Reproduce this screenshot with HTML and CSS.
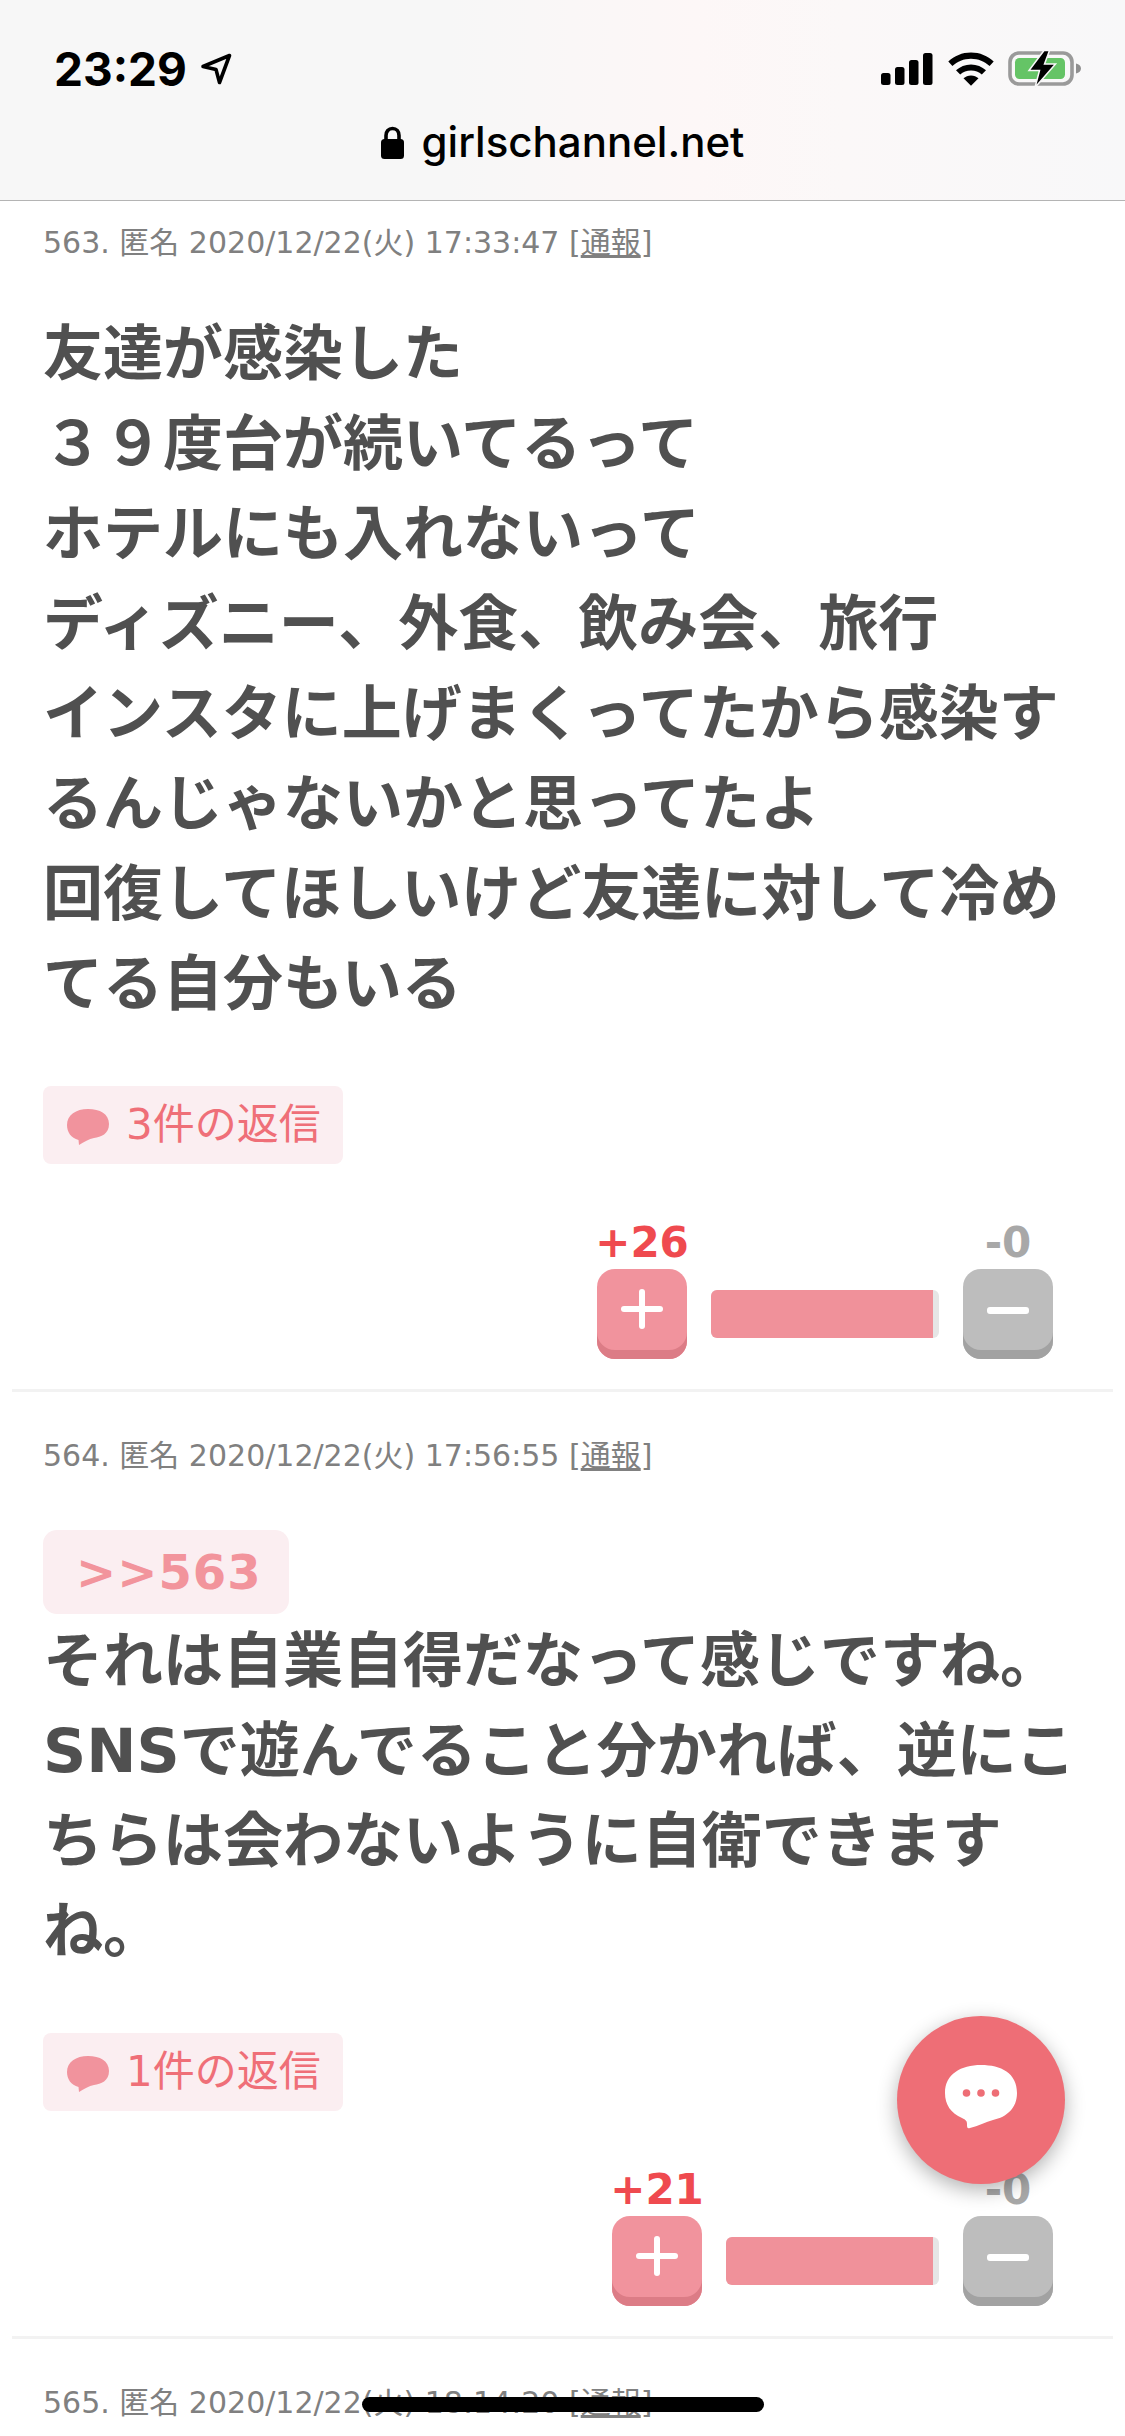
FILE: index.html
```html
<!DOCTYPE html>
<html lang="ja">
<head>
<meta charset="utf-8">
<title>girlschannel.net</title>
<link rel="stylesheet" href="styles.css">
</head>
<body>
<div class="page">
  <header class="browser-bar">
    <div class="status">
      <div class="status-left">
        <span class="clock">23:29</span>
        <svg class="loc" width="32" height="32" viewBox="0 0 32 32"><path d="M3 13.5 29.5 2.5 19.5 29.5 16 16.5Z" fill="none" stroke="#000" stroke-width="3.6" stroke-linejoin="round"/></svg>
      </div>
      <div class="status-right">
        <svg width="52" height="34" viewBox="0 0 52 34"><rect x="0" y="21" width="9.5" height="12" rx="2.5"/><rect x="14" y="15" width="9.5" height="18" rx="2.5"/><rect x="28" y="8" width="9.5" height="25" rx="2.5"/><rect x="42" y="1" width="9.5" height="32" rx="2.5"/></svg>
        <svg class="wifi" width="46" height="34" viewBox="0 0 46 34"><path d="M0.3 9.6C6.3 4 14.2 .6 23 .6S39.7 4 45.7 9.6L41.6 14C36.7 9.5 30.2 6.7 23 6.7S9.3 9.5 4.4 14Z"/><path d="M8 18.2C12 14.6 17.2 12.4 23 12.4S34 14.6 38 18.2L33.8 22.6C31 20 27.2 18.5 23 18.5S15 20 12.2 22.6Z"/><path d="M15.5 26.3C17.5 24.6 20.1 23.5 23 23.5S28.5 24.6 30.5 26.3L23 33.8Z"/></svg>
        <svg class="battery" width="74" height="38" viewBox="0 0 74 38"><rect x="2" y="3" width="62" height="31" rx="9" fill="none" stroke="#9a9a9a" stroke-width="3.6"/><rect x="7" y="8" width="50" height="21" rx="4.5" fill="#65c466"/><path d="M68 13.5c3 .6 5 2.600 5 5s-2 4.400-5 5Z" fill="#8f8f8f"/><path d="M36 .5 21 20.500H31.500L27 37.500 47.500 14H36.500L41.500 .5Z" fill="#000" stroke="#f8f8f8" stroke-width="1.500"/></svg>
      </div>
    </div>
    <div class="address">
      <svg class="lock" width="23" height="33" viewBox="0 0 23 33"><path d="M5 14V9.500C5 5.500 7.500 2.500 11.500 2.500S18 5.500 18 9.500V14" fill="none" stroke="#000" stroke-width="3.600"/><rect x="0" y="13" width="23" height="20" rx="3.500"/></svg>
      <span class="url">girlschannel.net</span>
    </div>
  </header>

  <main>
    <article class="post post-first">
      <p class="meta">563. 匿名 2020/12/22(火) 17:33:47 [<a class="report">通報</a>]</p>
      <p class="body">友達が感染した<br>３９度台が続いてるって<br>ホテルにも入れないって<br>ディズニー、外食、飲み会、旅行<br>インスタに上げまくってたから感染するんじゃないかと思ってたよ<br>回復してほしいけど友達に対して冷めてる自分もいる</p>
      <a class="replies">
        <svg class="bubble" width="42" height="37" viewBox="0 0 42 37"><path d="M21 0C33 0 42 5 42 15 42 25 34 28 27 29 22 30 17 33 12 36L11.500 31C4 29 0 23 0 16 0 6 9 0 21 0Z" fill="#f1939d"/></svg>
        <span>3件の返信</span>
      </a>
      <div class="votes">
        <div class="vote">
          <span class="count count-plus">+26</span>
          <button class="key key-plus"><span class="cross"></span></button>
        </div>
        <div class="bar" style="width:228px"><div class="bar-fill" style="width:222px"></div></div>
        <div class="vote">
          <span class="count count-minus">-0</span>
          <button class="key key-minus"><span class="dash"></span></button>
        </div>
      </div>
    </article>

    <article class="post">
      <p class="meta">564. 匿名 2020/12/22(火) 17:56:55 [<a class="report">通報</a>]</p>
      <a class="anchor">&gt;&gt;563</a>
      <p class="body">それは自業自得だなって感じですね。SNSで遊んでること分かれば、逆にこちらは会わないように自衛できますね。</p>
      <a class="replies">
        <svg class="bubble" width="42" height="37" viewBox="0 0 42 37"><path d="M21 0C33 0 42 5 42 15 42 25 34 28 27 29 22 30 17 33 12 36L11.500 31C4 29 0 23 0 16 0 6 9 0 21 0Z" fill="#f1939d"/></svg>
        <span>1件の返信</span>
      </a>
      <div class="votes">
        <div class="vote">
          <span class="count count-plus">+21</span>
          <button class="key key-plus"><span class="cross"></span></button>
        </div>
        <div class="bar" style="width:213px"><div class="bar-fill" style="width:207px"></div></div>
        <div class="vote">
          <span class="count count-minus">-0</span>
          <button class="key key-minus"><span class="dash"></span></button>
        </div>
      </div>
    </article>

    <article class="post">
      <p class="meta">565. 匿名 2020/12/22(火) 18:14:20 [<a class="report">通報</a>]</p>
    </article>
  </main>

  <button class="fab">
    <svg width="72" height="64" viewBox="0 0 72 64"><path d="M36 0C56 0 72 8 72 28 72 43 62 52 48 55 41 57 33 61 25 63 22 64 22 62 22 59 22 56 21 55 17 53 6 48 0 40 0 28 0 9 16 0 36 0Z" fill="#fff"/><circle cx="21.500" cy="28" r="3.800" fill="#ee6e76"/><circle cx="36" cy="28" r="3.800" fill="#ee6e76"/><circle cx="50.500" cy="28" r="3.800" fill="#ee6e76"/></svg>
  </button>
  <div class="home-bar"></div>
</div>
</body>
</html>
```
FILE: styles.css
```css
* { box-sizing: border-box; }
html, body { margin: 0; padding: 0; background: #fff; }
p { margin: 0; }

.page {
  position: relative;
  width: 1125px;
  height: 2436px;
  overflow: hidden;
  font-family: "DejaVu Sans", "Noto Sans CJK JP", sans-serif;
}

/* browser chrome */
.browser-bar {
  height: 201px;
  border-bottom: 1px solid #b4b4b4;
  background: linear-gradient(90deg, #f7f7f7 0, #f7f7f7 40%, #fdf7f7 62%, #fbf8f8 75%, #f8f8f9 100%);
  padding-top: 46px;
}
.status {
  display: flex;
  justify-content: space-between;
  align-items: center;
  height: 46px;
  padding: 0 43px 0 54px;
}
.status-left { display: flex; align-items: center; gap: 13px; }
.clock {
  font-family: Inter, "Liberation Sans", sans-serif;
  font-weight: 700;
  font-size: 46px;
  line-height: 46px;
  color: #000;
}
.status-right { display: flex; align-items: center; gap: 14px; }
.wifi { margin-left: 1px; }
.address {
  display: flex;
  justify-content: center;
  align-items: center;
  gap: 18px;
  margin-top: 20px;
  height: 60px;
}
.url {
  font-family: Inter, "Liberation Sans", sans-serif;
  font-weight: 500;
  font-size: 42px;
  line-height: 60px;
  color: #000;
}

/* posts */
.post {
  margin: 0 12px;
  padding: 44px 31px 30px;
  border-bottom: 3px solid #f2f2f2;
}
.post-first { padding-top: 22px; }
.meta {
  font-size: 30px;
  line-height: 40px;
  color: #808080;
  white-space: nowrap;
}
.report { text-decoration: underline; }
.body {
  margin-top: 46px;
  font-weight: 700;
  font-size: 60px;
  line-height: 90px;
  color: #505050;
}
.anchor {
  display: block;
  width: 246px;
  height: 84px;
  margin-top: 54px;
  padding-left: 33px;
  border-radius: 14px;
  background: #fbeef1;
  font-weight: 700;
  font-size: 48px;
  line-height: 84px;
  letter-spacing: 1px;
  color: #f2949c;
}
.anchor + .body { margin-top: 2px; }
.replies {
  display: flex;
  align-items: center;
  gap: 17px;
  width: 300px;
  height: 78px;
  margin-top: 57px;
  padding-left: 24px;
  border-radius: 8px;
  background: #fbeef1;
  font-size: 42px;
  line-height: 78px;
  color: #ef6f78;
}
.bubble { margin-top: 5px; }

/* votes */
.votes {
  display: flex;
  justify-content: flex-end;
  align-items: flex-end;
  gap: 24px;
  margin-top: 52px;
  padding-right: 29px;
}
.vote { display: flex; flex-direction: column; align-items: center; width: 90px; }
.count {
  font-weight: 700;
  font-size: 42px;
  line-height: 53px;
  white-space: nowrap;
}
.count-plus { color: #ef4a4f; }
.count-minus { color: #a8a8a8; }
.key {
  display: flex;
  justify-content: center;
  width: 90px;
  height: 90px;
  padding: 20px 0 0;
  border: 0;
  border-radius: 18px;
}
.key-plus { background: #f1939d; box-shadow: inset 0 -9px 0 #dc7c86; }
.key-minus { background: #bdbdbd; box-shadow: inset 0 -9px 0 #a2a2a2; }
.cross {
  position: relative;
  display: block;
  width: 42px;
  height: 40px;
}
.cross::before, .cross::after {
  content: "";
  position: absolute;
  background: #fff;
  border-radius: 3px;
}
.cross::before { left: 0; right: 0; top: 17px; height: 6px; }
.cross::after { top: 0; bottom: 0; left: 18px; width: 6px; }
.dash {
  display: block;
  width: 42px;
  height: 7px;
  margin-top: 18px;
  border-radius: 3px;
  background: #fff;
}
.bar {
  height: 48px;
  margin-bottom: 21px;
  border-radius: 6px;
  background: #e6e6e6;
  overflow: hidden;
}
.bar-fill { height: 100%; background: #f0919a; }

/* overlays */
.fab {
  position: absolute;
  left: 897px;
  top: 2016px;
  display: flex;
  justify-content: center;
  align-items: center;
  width: 168px;
  height: 168px;
  padding: 0;
  border: 0;
  border-radius: 50%;
  background: #ee6e76;
  box-shadow: 0 6px 20px rgba(0, 0, 0, .3);
}
.fab svg { margin-top: -6px; }
.home-bar {
  position: absolute;
  left: 362px;
  top: 2397px;
  width: 402px;
  height: 15px;
  border-radius: 8px;
  background: #000;
}
```
